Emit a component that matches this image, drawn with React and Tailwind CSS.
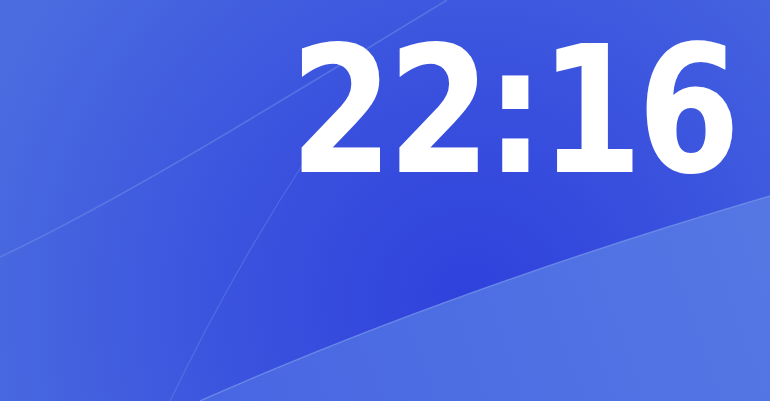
import React from "react";

const Wallpaper = () => (
  <svg
    className="absolute inset-0 h-full w-full"
    viewBox="0 0 770 401"
    preserveAspectRatio="none"
  >
    <defs>
      <radialGradient id="base" cx="470" cy="300" r="520" gradientUnits="userSpaceOnUse">
        <stop offset="0" stopColor="#2f41dc" />
        <stop offset="0.45" stopColor="#3a52de" />
        <stop offset="1" stopColor="#4a6ce0" />
      </radialGradient>
      <linearGradient id="wave" x1="200" y1="401" x2="770" y2="200" gradientUnits="userSpaceOnUse">
        <stop offset="0" stopColor="#4866e2" />
        <stop offset="0.5" stopColor="#4e6fe3" />
        <stop offset="1" stopColor="#5577e4" />
      </linearGradient>
    </defs>
    <rect width="770" height="401" fill="url(#base)" />
    <path
      d="M0 257 C 120 200, 250 120, 447 0"
      fill="none"
      stroke="#6a8ae8"
      strokeOpacity="0.55"
      strokeWidth="1.6"
    />
    <path
      d="M170 401 Q 250 235, 350 95"
      fill="none"
      stroke="#6a8ae8"
      strokeOpacity="0.45"
      strokeWidth="1.2"
    />
    <path d="M200 401 Q 450 290 770 196 L770 401 Z" fill="url(#wave)" />
    <path
      d="M200 401 Q 450 290 770 196"
      fill="none"
      stroke="#7391ea"
      strokeOpacity="0.8"
      strokeWidth="1.4"
    />
  </svg>
);

export default function App() {
  return (
    <div className="relative h-[401px] w-[770px] overflow-hidden bg-[#3d56de]">
      <Wallpaper />
      <div className="relative flex pl-[290px] pt-[23px]">
        <span className="block h-[177px] origin-left scale-x-[0.835] whitespace-nowrap text-[177px] font-bold leading-none tracking-[-6px] text-white font-['DejaVu_Sans',sans-serif]">
          22:16
        </span>
      </div>
    </div>
  );
}
